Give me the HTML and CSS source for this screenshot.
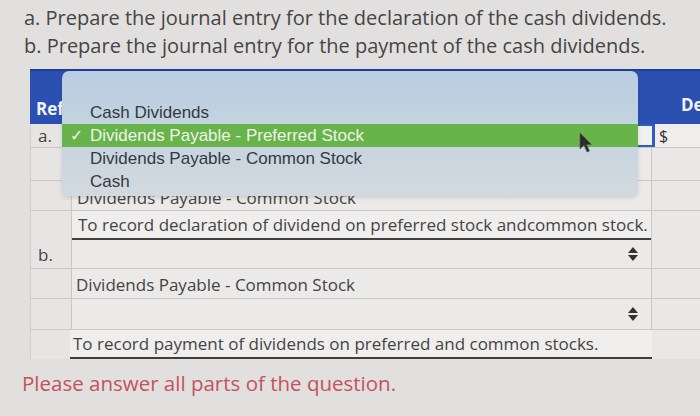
FILE: index.html
```html
<!DOCTYPE html>
<html>
<head>
<meta charset="utf-8">
<link rel="stylesheet" href="styles.css">
</head>
<body>
<div class="page">
  <div class="question">
    <p>a. Prepare the journal entry for the declaration of the cash dividends.</p>
    <p>b. Prepare the journal entry for the payment of the cash dividends.</p>
  </div>

  <div class="journal">
    <div class="row head">
      <div class="c ref">Ref</div>
      <div class="c acct"></div>
      <div class="c debit">Debit</div>
    </div>
    <div class="row r-a">
      <div class="c ref">a.</div>
      <div class="c acct"><div class="select focused"></div></div>
      <div class="c debit"><span class="dollar">$</span></div>
    </div>
    <div class="row r-2">
      <div class="c ref"></div>
      <div class="c acct"></div>
      <div class="c debit"></div>
    </div>
    <div class="row r-3">
      <div class="c ref"></div>
      <div class="c acct"><span class="txt">Dividends Payable - Common Stock</span></div>
      <div class="c debit"></div>
    </div>
    <div class="row r-4">
      <div class="c ref"></div>
      <div class="c acct"><div class="memo">To record declaration of dividend on preferred stock andcommon stock.</div></div>
      <div class="c debit"></div>
    </div>
    <div class="row r-5">
      <div class="c ref">b.</div>
      <div class="c acct"><div class="select"><span class="arrows"></span></div></div>
      <div class="c debit"></div>
    </div>
    <div class="row r-6">
      <div class="c ref"></div>
      <div class="c acct"><span class="txt">Dividends Payable - Common Stock</span></div>
      <div class="c debit"></div>
    </div>
    <div class="row r-7">
      <div class="c ref"></div>
      <div class="c acct"><div class="select"><span class="arrows"></span></div></div>
      <div class="c debit"></div>
    </div>
    <div class="row r-8">
      <div class="c ref"></div>
      <div class="c acct"><div class="memo memo2">To record payment of dividends on preferred and common stocks.</div></div>
      <div class="c debit"></div>
    </div>

    <div class="menu">
      <div class="item">Cash Dividends</div>
      <div class="item on"><span class="check">✓</span>Dividends Payable - Preferred Stock</div>
      <div class="item">Dividends Payable - Common Stock</div>
      <div class="item">Cash</div>
    </div>
    <svg class="cursor" width="14" height="22" viewBox="0 0 14 22">
      <polygon points="1,1 1,17 5,13 8,20 10.5,19 7.5,12.5 12.5,12.5" fill="#2b2b2b" stroke="#555" stroke-width="0.6"/>
    </svg>
  </div>

  <p class="warn">Please answer all parts of the question.</p>
</div>
</body>
</html>
```
FILE: styles.css
```css
html, body {
  margin: 0;
  padding: 0;
  width: 700px;
  height: 416px;
  overflow: hidden;
}
body {
  background: #e1e0de;
  font-family: "Open Sans", "Liberation Sans", sans-serif;
  color: #444;
}
.page {
  padding-top: 4px;
}
.question {
  padding-left: 24px;
}
.question p {
  margin: 0;
  font-size: 20px;
  line-height: 28px;
  color: #454545;
}
.journal {
  position: relative;
  margin-top: 9px;
  margin-left: 30px;
  width: 742px;
}
.row {
  display: grid;
  grid-template-columns: 42px 580px 120px;
  border-bottom: 1px solid #c8c8c6;
}
.c {
  display: flex;
  align-items: center;
  font-size: 17px;
  color: #444;
}
.c.ref {
  padding-left: 7px;
  background: #e6e5e3;
  border-right: 1px solid #c8c8c6;
  border-left: 1px solid #cfcfcd;
}
.c.acct {
  background: #ebeae8;
  border-right: 1px solid #c8c8c6;
}
.c.debit {
  background: #e9e8e6;
}
.head {
  height: 53px;
  border-top: 2px solid #1e3f93;
  border-bottom: 0;
  background: #2c50b1;
}
.head .c {
  background: transparent;
  border: 0;
  color: #f2f4fa;
  font-weight: 700;
}
.head .ref {
  align-items: flex-end;
  padding-bottom: 4px;
  padding-left: 6px;
}
.head .debit {
  align-items: flex-end;
  padding-left: 29px;
  padding-bottom: 8px;
}
.r-a { height: 23px; }
.r-2 { height: 32px; }
.r-3 { height: 29px; }
.r-4 { height: 29px; }
.r-5 { height: 28px; }
.r-6 { height: 29px; }
.r-7 { height: 30px; }
.r-8 { height: 29px; }
.r-4, .r-8 { border-bottom: 0; }
.r-a .ref, .r-5 .ref { padding-left: 7px; }
.select {
  flex: 1;
  align-self: stretch;
  position: relative;
}
.select.focused {
  background: #f1f1f0;
  border: 2px solid #2e5cc2;
  margin-right: -3px;
}
.arrows {
  position: absolute;
  right: 13px;
  top: 50%;
  width: 10px;
  height: 14px;
  margin-top: -7px;
}
.arrows::before, .arrows::after {
  content: "";
  position: absolute;
  left: 0;
  border-left: 5px solid transparent;
  border-right: 5px solid transparent;
}
.arrows::before {
  top: 0;
  border-bottom: 6px solid #333;
}
.arrows::after {
  bottom: 0;
  border-top: 6px solid #333;
}
.dollar {
  padding-left: 4px;
  font-size: 16px;
  color: #333;
}
.r-a .debit {
  background: #efeeec;
  border-left: 3px solid #2e5cc2;
}
.txt {
  padding-left: 5px;
  padding-top: 4px;
}
.r-6 .txt { padding-left: 4px; padding-top: 2px; }
.memo {
  flex: 1;
  align-self: stretch;
  display: flex;
  align-items: center;
  padding-left: 6px;
  background: #efeeed;
  border-bottom: 2px solid #3e3e3e;
}
.memo2 {
  padding-left: 3px;
  margin-left: -2px;
  margin-right: -4px;
}
.menu {
  position: absolute;
  left: 32px;
  top: 2px;
  width: 576px;
  height: 125px;
  box-sizing: border-box;
  padding-top: 30px;
  border-radius: 7px;
  background: linear-gradient(180deg, #b9cde2 0%, #c3d3df 45%, #d3d9de 100%);
  box-shadow: 0 2px 4px rgba(0,0,0,0.12);
  font-family: "Liberation Sans", Arial, sans-serif;
  font-size: 17px;
  color: #333a40;
}
.item {
  height: 23px;
  line-height: 23px;
  padding-left: 28px;
  position: relative;
}
.item.on {
  background: #68b34a;
  color: #eef4ec;
}
.check {
  position: absolute;
  left: 8px;
  top: 0;
  font-family: "DejaVu Sans", sans-serif;
  font-size: 16px;
}
.cursor {
  position: absolute;
  left: 549px;
  top: 63px;
}
.warn {
  margin: 12px 0 0 22px;
  font-size: 20.5px;
  line-height: 24px;
  color: #c4525c;
}
```
